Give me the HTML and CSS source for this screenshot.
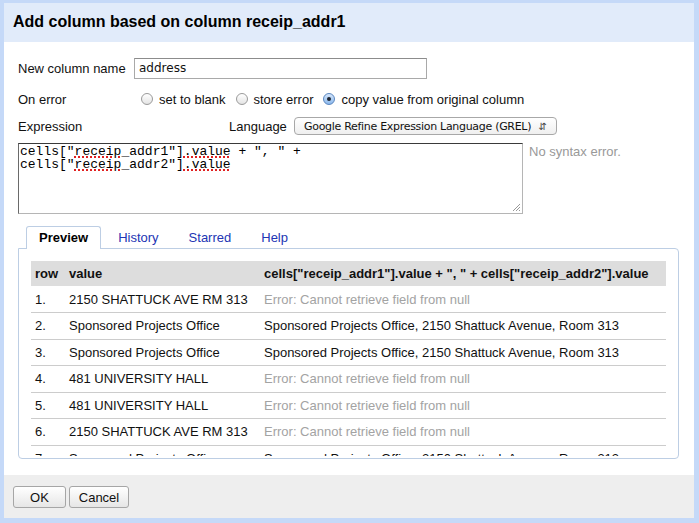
FILE: index.html
```html
<!DOCTYPE html>
<html>
<head>
<meta charset="utf-8">
<link rel="stylesheet" href="styles.css">
</head>
<body>
<div class="dialog">
  <div class="titlebar">Add column based on column receip_addr1</div>
  <div class="content">
    <div class="row row-name">
      <div class="label">New column name</div>
      <div class="textinput">address</div>
    </div>
    <div class="row row-error">
      <div class="label">On error</div>
      <div class="radios">
        <span class="radio"></span><span class="radio-label">set to blank</span>
        <span class="radio"></span><span class="radio-label">store error</span>
        <span class="radio checked"></span><span class="radio-label">copy value from original column</span>
      </div>
    </div>
    <div class="row row-expr">
      <div class="label wide">Expression</div>
      <div class="lang-label">Language</div>
      <div class="select"><span class="select-text">Google Refine Expression Language (GREL)</span><span class="arrows">&#8693;</span></div>
    </div>
    <div class="row row-area">
      <div class="textarea"><span class="line">cells["<span class="sp">receip</span>_addr1"]<span class="sp">.value</span> + ", " +</span><span class="line">cells["<span class="sp">receip</span>_addr2"]<span class="sp">.value</span></span>
        <svg class="grip" width="10" height="10" viewBox="0 0 10 10"><path d="M9 2 L2 9 M9 5 L5 9 M9 8 L8 9" stroke="#999" stroke-width="1" fill="none"/></svg>
      </div>
      <div class="status">No syntax error.</div>
    </div>
    <div class="tabs">
      <div class="tab active">Preview</div>
      <div class="tab">History</div>
      <div class="tab">Starred</div>
      <div class="tab">Help</div>
    </div>
    <div class="panel">
      <div class="scroll">
        <table class="preview">
          <thead>
            <tr><th class="c1">row</th><th class="c2">value</th><th class="c3">cells["receip_addr1"].value + ", " + cells["receip_addr2"].value</th></tr>
          </thead>
          <tbody>
            <tr><td>1.</td><td>2150 SHATTUCK AVE RM 313</td><td class="err">Error: Cannot retrieve field from null</td></tr>
            <tr><td>2.</td><td>Sponsored Projects Office</td><td>Sponsored Projects Office, 2150 Shattuck Avenue, Room 313</td></tr>
            <tr><td>3.</td><td>Sponsored Projects Office</td><td>Sponsored Projects Office, 2150 Shattuck Avenue, Room 313</td></tr>
            <tr><td>4.</td><td>481 UNIVERSITY HALL</td><td class="err">Error: Cannot retrieve field from null</td></tr>
            <tr><td>5.</td><td>481 UNIVERSITY HALL</td><td class="err">Error: Cannot retrieve field from null</td></tr>
            <tr><td>6.</td><td>2150 SHATTUCK AVE RM 313</td><td class="err">Error: Cannot retrieve field from null</td></tr>
            <tr><td>7.</td><td>Sponsored Projects Office</td><td>Sponsored Projects Office, 2150 Shattuck Avenue, Room 313</td></tr>
          </tbody>
        </table>
      </div>
    </div>
  </div>
  <div class="footer">
    <div class="button ok">OK</div>
    <div class="button cancel">Cancel</div>
  </div>
</div>
</body>
</html>
```

FILE: styles.css
```css
* { box-sizing: border-box; }
html, body { margin: 0; padding: 0; background: #c5d9f8; }
body { font-family: "Liberation Sans", Arial, sans-serif; font-size: 13px; color: #111; }

.dialog {
  width: 699px;
  height: 523px;
  border-style: solid;
  border-color: #c5d9f8;
  border-width: 3px 5px 5px 4px;
  background: #fff;
  display: flex;
  flex-direction: column;
}

.titlebar {
  height: 39px;
  background: #e1ebfa;
  font-weight: bold;
  font-size: 16px;
  padding-left: 9px;
  display: flex;
  align-items: center;
  padding-bottom: 1px;
  color: #000;
}

.content {
  flex: 1;
  padding: 16px 15px 0 14px;
}

.row { display: flex; align-items: center; }
.label { width: 116px; flex: none; }
.label.wide { width: 211px; }

.row-name { height: 21px; }
.textinput {
  width: 293px;
  height: 21px;
  border: 1px solid #a9a9a9;
  border-top-color: #8c8c8c;
  font-family: "DejaVu Sans", sans-serif;
  font-size: 12px;
  padding: 0 4px;
  line-height: 19px;
  color: #111;
}

.row-error { height: 18px; margin-top: 11px; }
.radios { display: flex; align-items: center; padding-left: 7px; }
.radio {
  width: 12px; height: 12px;
  border-radius: 50%;
  border: 1px solid #9a9a9a;
  background: linear-gradient(#fff, #e4e4e4);
  margin-right: 6px;
  position: relative;
  flex: none;
}
.radio.checked {
  border-color: #5a86bf;
  background: linear-gradient(#d5e6fb, #8bb8ec);
}
.radio.checked::after {
  content: "";
  position: absolute;
  left: 3px; top: 3px;
  width: 4px; height: 4px;
  border-radius: 50%;
  background: #1d2430;
}
.radio-label { margin-right: 10px; white-space: nowrap; }

.row-expr { height: 18px; margin-top: 9px; }
.lang-label { width: 65px; flex: none; }
.select {
  width: 263px;
  height: 18px;
  border: 1px solid #a8a8a8;
  border-radius: 4px;
  background: linear-gradient(#fff, #efefef);
  font-family: "DejaVu Sans", sans-serif;
  font-size: 11px;
  padding: 0 9px 0 9px;
  display: flex;
  align-items: center;
  color: #111;
  white-space: nowrap;
  overflow: hidden;
}
.select-text { letter-spacing: -0.3px; }
.arrows { font-size: 10px; color: #444; margin-left: auto; }

.row-area { align-items: flex-start; margin-top: 8px; }
.textarea {
  width: 505px;
  height: 71px;
  border: 1px solid #b5b5b5;
  border-top-color: #3a3a3a;
  border-left-color: #6a6a6a;
  font-family: "Liberation Mono", "Courier New", monospace;
  font-size: 13px;
  line-height: 13px;
  padding: 1px 1px;
  color: #000;
  position: relative;
  flex: none;
}
.line { display: block; white-space: pre; }
.sp {
  text-decoration: underline dotted #e02020;
  text-decoration-thickness: 2px;
  text-underline-offset: 1px;
}
.grip { position: absolute; right: 1px; bottom: 1px; }
.status { color: #999; margin-left: 6px; margin-top: 1px; }

.tabs { display: flex; gap: 4px; margin-top: 12px; padding-left: 8px; position: relative; z-index: 1; }
.tab {
  height: 23px;
  padding: 0 12px;
  line-height: 22px;
  color: #2235b4;
  border: 1px solid transparent;
  border-bottom: none;
}
.tab.active {
  color: #000;
  font-weight: bold;
  background: #fff;
  border-color: #bdcee4;
  border-radius: 3px 3px 0 0;
}

.panel {
  margin-top: -1px;
  height: 211px;
  border: 1px solid #bdcee4;
  border-radius: 0 4px 4px 4px;
  padding: 12px 12px 2px 12px;
}
.scroll { height: 195px; overflow: hidden; }

.preview { width: 100%; border-collapse: collapse; }
.preview th {
  background: #dddddd;
  text-align: left;
  font-weight: bold;
  height: 25px;
  padding: 0 4px;
  white-space: nowrap;
}
.preview td {
  height: 26.5px;
  padding: 0 4px;
  border-bottom: 1px solid #cccccc;
  white-space: nowrap;
}
.c1 { width: 34px; }
.c2 { width: 195px; }
.err { color: #a3a3a3; }

.footer {
  height: 43px;
  background: #eeeeee;
  padding: 11px 0 0 9px;
  display: flex;
  gap: 3px;
  align-items: flex-start;
}
.button {
  height: 22px;
  border: 1px solid #a6a6a6;
  border-radius: 3px;
  background: linear-gradient(#ffffff, #e6e6e6);
  display: flex;
  align-items: center;
  justify-content: center;
  color: #111;
}
.ok { width: 53px; }
.cancel { width: 60px; }
```
